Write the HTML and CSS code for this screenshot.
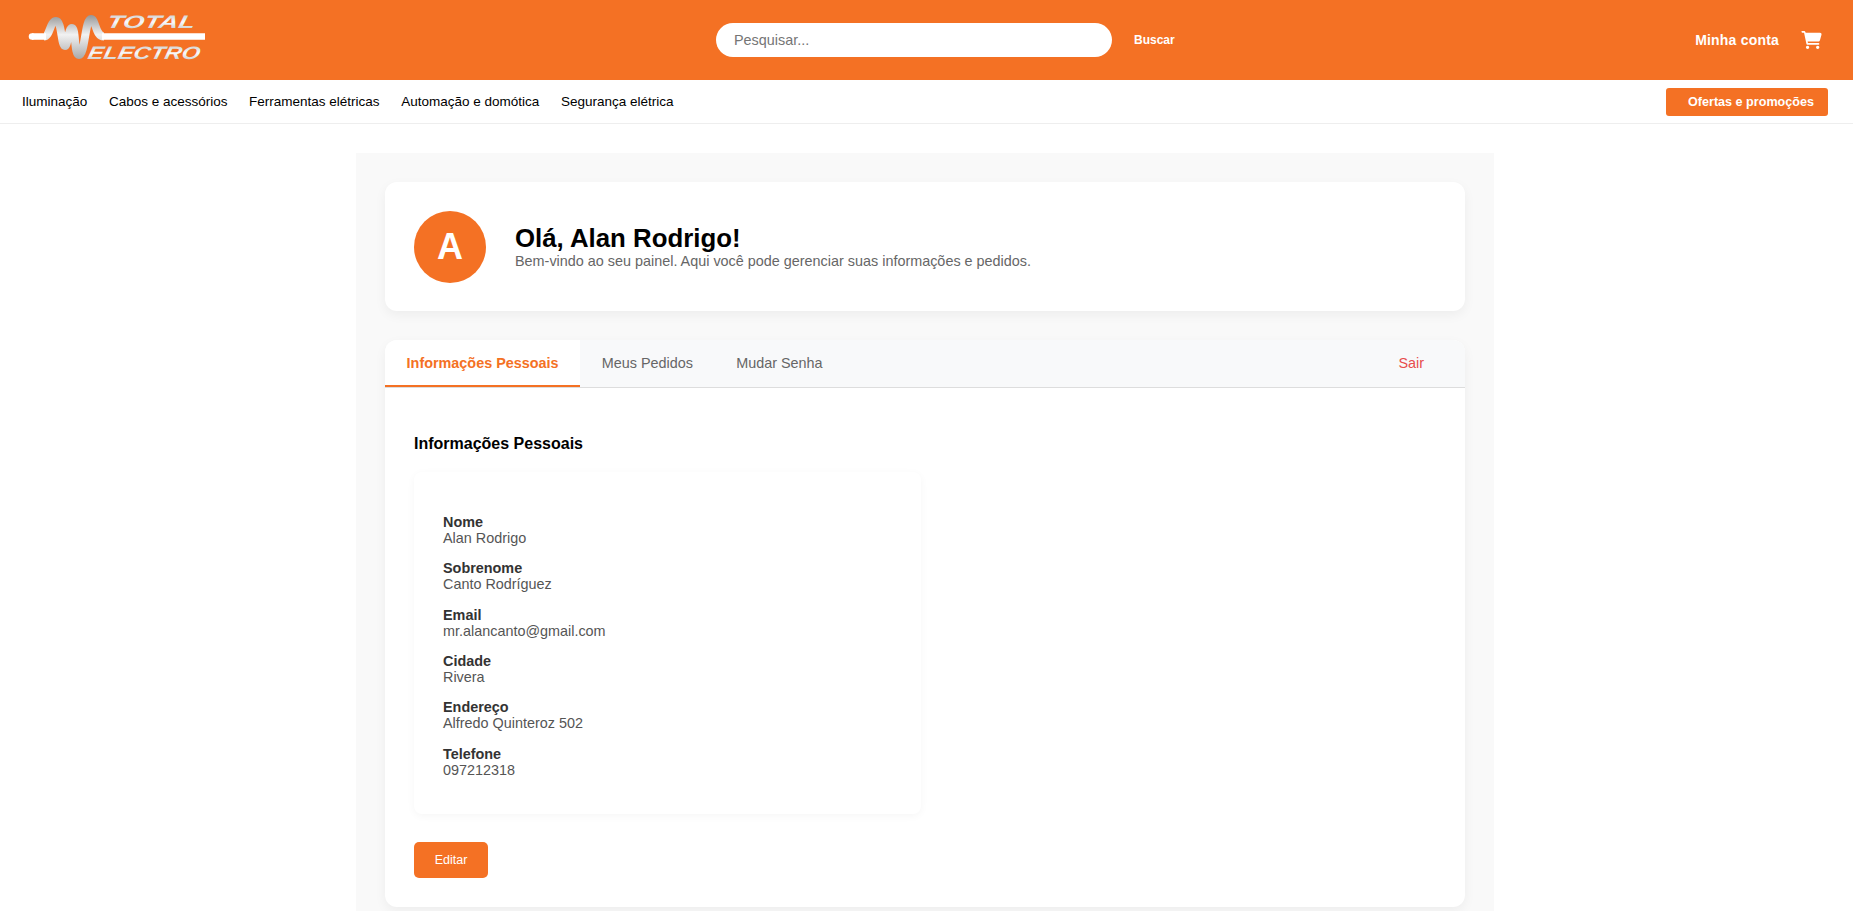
FILE: index.html
```html
<!DOCTYPE html>
<html lang="pt">
<head>
	<meta charset="UTF-8">
	<title>Minha conta - Total Electro</title>
	<link rel="stylesheet" href="styles.css">
</head>
<body>
	<header class="topbar">
		<a class="logo" href="#">
			<svg width="180" height="56" viewBox="28 8 180 56">
				<defs>
					<linearGradient id="metal" x1="0" y1="0" x2="0" y2="1">
						<stop offset="0" stop-color="#c4c4c4"/>
						<stop offset="0.5" stop-color="#fafafa"/>
						<stop offset="1" stop-color="#bcbcbc"/>
					</linearGradient>
					<linearGradient id="wave" gradientUnits="userSpaceOnUse" x1="0" y1="14" x2="0" y2="60">
						<stop offset="0" stop-color="#929292"/>
						<stop offset="0.45" stop-color="#f2f2f2"/>
						<stop offset="1" stop-color="#a6a6a6"/>
					</linearGradient>
				</defs>
				<path d="M44 36.500C50 36.500 50 21 56 21C62 21 61 46 65 46C68 46 68 28 72 28C76 28 74 55 79 55C85 55 85 19 91 19C96 19 95 36.500 104 36.500" fill="none" stroke="url(#wave)" stroke-width="8" stroke-linejoin="round"/>
				<path d="M32 36.500H46M102 36.500H205" fill="none" stroke="#fff" stroke-width="6.500"/>
				<circle cx="32" cy="36.500" r="3.250" fill="#fff"/>
				<text class="logo-text" transform="translate(106 28) skewX(-12)" textLength="88" lengthAdjust="spacingAndGlyphs" fill="url(#metal)">TOTAL</text>
				<text class="logo-text" transform="translate(87 59) skewX(-12)" textLength="112" lengthAdjust="spacingAndGlyphs" fill="url(#metal)">ELECTRO</text>
			</svg>
		</a>
		<form class="search">
			<input class="search-input" type="text" placeholder="Pesquisar...">
			<button class="search-btn" type="button">Buscar</button>
		</form>
		<div class="account">
			<a class="account-link" href="#">Minha conta</a>
			<svg class="cart" width="21" height="18" viewBox="0 0 576 512"><path fill="#fff" d="M0 24C0 10.700 10.700 0 24 0H69.500C91.500 0 110.900 14.300 116.900 35.200L122 48H530C559 48 580 76 572 104L528 264C522 285 503 300 481 300H178L187 344H488C501 344 512 355 512 368C512 381 501 392 488 392H168C156 392 146 384 144 372L76 48C74 44 72 48 69.500 48H24C10.700 48 0 37.300 0 24ZM128 464A48 48 0 1 1 224 464A48 48 0 1 1 128 464ZM416 464A48 48 0 1 1 512 464A48 48 0 1 1 416 464Z"/></svg>
		</div>
	</header>

	<nav class="mainnav">
		<ul class="nav-links">
			<li><a href="#">Iluminação</a></li>
			<li><a href="#">Cabos e acessórios</a></li>
			<li><a href="#">Ferramentas elétricas</a></li>
			<li><a href="#">Automação e domótica</a></li>
			<li><a href="#">Segurança elétrica</a></li>
		</ul>
		<a class="offers" href="#">Ofertas e promoções</a>
	</nav>

	<main class="panel">
		<section class="welcome">
			<div class="avatar">A</div>
			<div class="welcome-text">
				<h1>Olá, Alan Rodrigo!</h1>
				<p>Bem-vindo ao seu painel. Aqui você pode gerenciar suas informações e pedidos.</p>
			</div>
		</section>

		<section class="tabs-card">
			<div class="tabs">
				<a class="tab active" href="#">Informações Pessoais</a>
				<a class="tab" href="#">Meus Pedidos</a>
				<a class="tab" href="#">Mudar Senha</a>
				<a class="tab logout" href="#">Sair</a>
			</div>
			<div class="tab-body">
				<h2>Informações Pessoais</h2>
				<div class="info-box">
					<div class="info-row"><strong>Nome</strong><span>Alan Rodrigo</span></div>
					<div class="info-row"><strong>Sobrenome</strong><span>Canto Rodríguez</span></div>
					<div class="info-row"><strong>Email</strong><span>mr.alancanto@gmail.com</span></div>
					<div class="info-row"><strong>Cidade</strong><span>Rivera</span></div>
					<div class="info-row"><strong>Endereço</strong><span>Alfredo Quinteroz 502</span></div>
					<div class="info-row"><strong>Telefone</strong><span>097212318</span></div>
				</div>
				<button class="edit-btn" type="button">Editar</button>
			</div>
		</section>
	</main>
</body>
</html>
```

FILE: styles.css
```css
* {
	box-sizing: border-box;
}
html, body {
	margin: 0;
	padding: 0;
}
body {
	font-family: "Liberation Sans", Arial, sans-serif;
	font-size: 14.4px;
	background: #fff;
	color: #000;
}
a {
	color: inherit;
	text-decoration: none;
}

/* top bar */
.topbar {
	height: 80px;
	background: #f47124;
	display: flex;
	align-items: center;
	padding: 0 31px 0 28px;
}
.logo {
	display: block;
	width: 180px;
	height: 56px;
	margin-top: -8px;
}
.logo-text {
	font-family: "Liberation Sans", Arial, sans-serif;
	font-size: 18px;
	font-weight: bold;
	font-style: italic;
}
.search {
	display: flex;
	align-items: center;
	margin-left: 508px;
}
.search-input {
	width: 396px;
	height: 34px;
	border: 0;
	border-radius: 17px;
	padding: 0 18px;
	font-family: inherit;
	font-size: 14.4px;
	outline: none;
}
.search-input::placeholder {
	color: #757575;
}
.search-btn {
	border: 0;
	background: none;
	color: #fff;
	font-family: inherit;
	font-size: 12px;
	font-weight: bold;
	margin-left: 22px;
	padding: 0;
}
.account {
	margin-left: auto;
	display: flex;
	align-items: center;
	gap: 22px;
	color: #fff;
}
.account-link {
	font-size: 14px;
	font-weight: bold;
	letter-spacing: 0.2px;
}

/* nav */
.mainnav {
	height: 44px;
	border-bottom: 1px solid #eee;
	display: flex;
	align-items: center;
	justify-content: space-between;
	padding: 0 25px 0 22px;
}
.nav-links {
	list-style: none;
	display: flex;
	gap: 21.600px;
	margin: 0;
	padding: 0;
	font-size: 13.5px;
}
.offers {
	width: 162px;
	height: 28px;
	margin-top: 1px;
	background: #f47124;
	color: #fff;
	border-radius: 3px;
	font-size: 12.6px;
	font-weight: bold;
	line-height: 28px;
	padding-left: 22px;
	white-space: nowrap;
}

/* panel */
.panel {
	width: 1138px;
	margin: 29px 0 0 356px;
	padding: 29px;
	background: #f9f9f9;
}
.welcome {
	height: 129px;
	background: #fff;
	border-radius: 12px;
	box-shadow: 0 4px 12px rgba(0, 0, 0, 0.05);
	display: flex;
	align-items: center;
	gap: 29px;
	padding: 0 29px;
}
.avatar {
	width: 72px;
	height: 72px;
	border-radius: 50%;
	background: #f47124;
	color: #fff;
	font-size: 36px;
	font-weight: bold;
	display: flex;
	align-items: center;
	justify-content: center;
}
.welcome-text h1 {
	margin: 0;
	font-size: 25.8px;
	line-height: 29px;
}
.welcome-text p {
	margin: 0;
	color: #666;
	line-height: 16px;
}
.tabs-card {
	margin-top: 29px;
	background: #fff;
	border-radius: 12px;
	box-shadow: 0 4px 12px rgba(0, 0, 0, 0.05);
	overflow: hidden;
}
.tabs {
	display: flex;
	height: 48px;
	background: #f8f9fa;
	border-bottom: 1px solid #ddd;
}
.tab {
	height: 47px;
	padding: 0 21.600px;
	line-height: 47px;
	color: #666;
	white-space: nowrap;
}
.tab.active {
	background: #fff;
	color: #f47124;
	font-weight: bold;
	border-bottom: 2px solid #f47124;
}
.tab.logout {
	margin-left: auto;
	color: #e74c4c;
	padding-right: 41px;
}
.tab-body {
	padding: 29px;
}
.tab-body h2 {
	margin: 17px 0 0;
	font-size: 16px;
	line-height: 19px;
}
.info-box {
	width: 507px;
	height: 342px;
	margin-top: 19px;
	padding: 41.800px 29px 0;
	background: #fff;
	border-radius: 8px;
	box-shadow: 0 2px 8px rgba(0, 0, 0, 0.04);
}
.info-row {
	display: flex;
	flex-direction: column;
	height: 46.400px;
	line-height: 16px;
}
.info-row strong {
	color: #333;
}
.info-row span {
	color: #555;
}
.edit-btn {
	display: block;
	width: 74px;
	height: 36px;
	margin-top: 28px;
	border: 0;
	border-radius: 5px;
	background: #f47124;
	color: #fff;
	font-family: inherit;
	font-size: 12.5px;
}
```
